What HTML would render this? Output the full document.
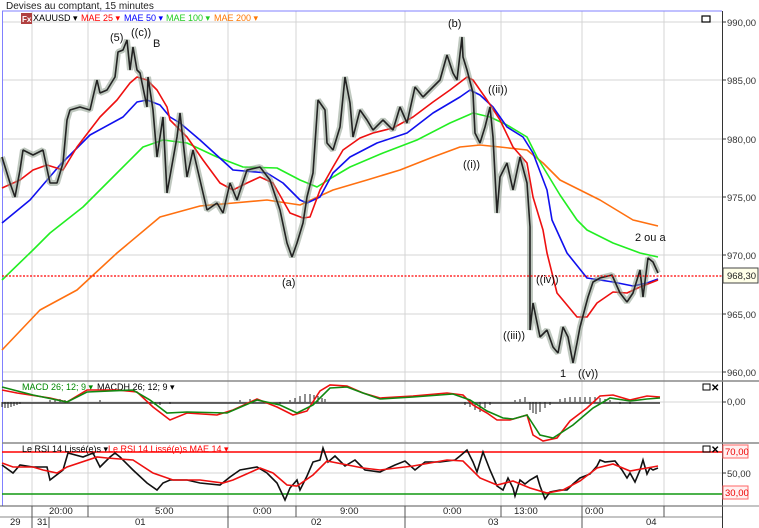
<!DOCTYPE html>
<html><head><meta charset="utf-8"><style>
html,body{margin:0;padding:0;background:#fff;width:759px;height:528px;overflow:hidden}
svg{display:block;font-family:"Liberation Sans",sans-serif}
</style></head><body>
<svg width="759" height="528" viewBox="0 0 759 528" xmlns="http://www.w3.org/2000/svg">
<rect width="759" height="528" fill="#fff"/>
<text x="6" y="9" font-size="10" fill="#222">Devises au comptant, 15 minutes</text>
<g stroke="#d4d4d4" stroke-width="1">
<line x1="32" y1="11" x2="32" y2="506"/><line x1="88" y1="11" x2="88" y2="506"/>
<line x1="228" y1="11" x2="228" y2="506"/><line x1="296" y1="11" x2="296" y2="506"/>
<line x1="405" y1="11" x2="405" y2="506"/><line x1="501" y1="11" x2="501" y2="506"/>
<line x1="582" y1="11" x2="582" y2="506"/><line x1="664" y1="11" x2="664" y2="506"/>
<line x1="2" y1="22" x2="722" y2="22"/><line x1="2" y1="80" x2="722" y2="80"/>
<line x1="2" y1="139" x2="722" y2="139"/><line x1="2" y1="197" x2="722" y2="197"/>
<line x1="2" y1="255" x2="722" y2="255"/><line x1="2" y1="314" x2="722" y2="314"/>
<line x1="2" y1="372" x2="722" y2="372"/><line x1="2" y1="402" x2="722" y2="402"/>
<line x1="2" y1="473" x2="722" y2="473"/>
</g>
<line x1="2" y1="11" x2="722" y2="11" stroke="#8080ff"/>
<line x1="2.5" y1="11" x2="2.5" y2="506" stroke="#8080ff"/>
<line x1="722.5" y1="11" x2="722.5" y2="528" stroke="#333"/>
<line x1="2" y1="381" x2="722" y2="381" stroke="#888" stroke-width="1.5"/>
<line x1="2" y1="443" x2="722" y2="443" stroke="#888" stroke-width="1.5"/>
<line x1="0" y1="506" x2="722" y2="506" stroke="#555"/>
<line x1="0" y1="517" x2="722" y2="517" stroke="#888"/>
<rect x="21" y="13" width="11" height="11" fill="#b04040"/><text x="22" y="22" font-size="8" fill="#fff" font-weight="bold">Fx</text>
<text x="33" y="21" font-size="9" fill="#000">XAUUSD ▾</text>
<text x="81" y="21" font-size="9" fill="#f00">MAE 25 ▾</text>
<text x="124" y="21" font-size="9" fill="#00f">MAE 50 ▾</text>
<text x="166" y="21" font-size="9" fill="#2c2">MAE 100 ▾</text>
<text x="214" y="21" font-size="9" fill="#f70">MAE 200 ▾</text>
<rect x="702" y="16" width="8" height="6" fill="none" stroke="#000" stroke-width="1.2"/>
<g fill="none" stroke-width="1.6" stroke-linejoin="round">
<polyline stroke="#ff7010" points="2,350 40,310 77,290 117,253 160,217 200,206 267,200 300,205 333,190 367,180 400,170 433,157 460,147 480,145 500,147 527,150 543,163 560,180 600,200 633,220 658,226"/>
<polyline stroke="#22ee22" points="2,280 33,250 50,233 83,207 117,173 143,147 163,140 187,143 217,157 243,167 277,168 300,180 317,187 333,177 350,167 383,153 417,140 450,123 473,113 490,117 507,125 527,137 537,157 560,195 577,220 587,230 613,243 640,253 658,257"/>
<polyline stroke="#1010ee" points="2,223 30,200 60,165 90,135 123,117 137,102 147,100 160,105 170,117 180,123 200,140 233,170 267,173 283,183 300,200 307,203 320,197 333,173 350,157 377,143 407,133 433,113 460,97 470,90 480,95 493,107 507,127 523,137 533,153 547,190 552,220 567,253 587,278 613,282 633,286 647,283 658,279"/>
<polyline stroke="#ee1010" points="2,188 20,180 33,170 47,165 63,170 77,147 90,130 100,117 117,100 130,83 137,77 147,80 157,90 167,107 170,120 187,137 203,160 220,183 233,190 247,183 260,177 273,183 290,213 303,218 310,217 320,190 333,167 343,150 360,138 373,133 393,128 413,117 433,102 450,90 467,77 473,80 487,100 500,120 513,147 527,163 533,197 543,230 547,253 557,293 577,317 587,317 597,303 613,292 627,293 640,287 658,280"/>
</g>
<g fill="none" stroke-linejoin="bevel">
<polyline id="pr" stroke="#8a9a8a" stroke-opacity="0.55" stroke-width="6" points="2,157 10,183 15,197 20,170 23,150 33,155 43,150 50,183 57,183 63,163 67,120 70,110 80,107 90,110 93,97 97,80 100,93 107,90 115,77 118,52 123,50 127,40 130,70 133,47 137,70 140,73 147,107 148,77 153,110 157,157 163,117 167,193 177,137 180,113 187,177 193,150 200,180 207,210 217,203 223,213 230,183 237,200 247,170 260,167 270,180 280,210 287,243 292,257 297,243 303,223 307,197 313,173 318,100 325,110 327,143 333,150 340,127 345,77 350,103 353,137 360,110 367,120 373,130 383,120 393,130 400,107 407,123 415,87 423,97 433,87 440,80 447,55 453,73 457,80 462,37 463,57 467,70 473,93 475,133 480,143 485,127 490,107 493,137 497,213 500,177 507,163 513,190 520,157 527,183 530,227 530,330 533,303 540,337 547,330 553,347 558,353 563,327 568,337 573,363 577,343 580,327 588,297 593,282 600,278 612,275 620,293 627,302 633,293 640,270 643,297 648,258 653,262 658,273"/>
<polyline stroke="#222" stroke-width="1.6" points="2,157 10,183 15,197 20,170 23,150 33,155 43,150 50,183 57,183 63,163 67,120 70,110 80,107 90,110 93,97 97,80 100,93 107,90 115,77 118,52 123,50 127,40 130,70 133,47 137,70 140,73 147,107 148,77 153,110 157,157 163,117 167,193 177,137 180,113 187,177 193,150 200,180 207,210 217,203 223,213 230,183 237,200 247,170 260,167 270,180 280,210 287,243 292,257 297,243 303,223 307,197 313,173 318,100 325,110 327,143 333,150 340,127 345,77 350,103 353,137 360,110 367,120 373,130 383,120 393,130 400,107 407,123 415,87 423,97 433,87 440,80 447,55 453,73 457,80 462,37 463,57 467,70 473,93 475,133 480,143 485,127 490,107 493,137 497,213 500,177 507,163 513,190 520,157 527,183 530,227 530,330 533,303 540,337 547,330 553,347 558,353 563,327 568,337 573,363 577,343 580,327 588,297 593,282 600,278 612,275 620,293 627,302 633,293 640,270 643,297 648,258 653,262 658,273"/>
</g>
<line x1="2" y1="276" x2="722" y2="276" stroke="#f00" stroke-dasharray="2,1.5" stroke-width="1.3"/>
<rect x="723" y="268" width="35" height="15" fill="#ffffe8" stroke="#444"/>
<text x="727" y="279" font-size="9.5" fill="#222">968,30</text>
<g font-size="11" fill="#111">
<text x="110" y="41">(5)</text><text x="131" y="36">((c))</text><text x="153" y="47">B</text>
<text x="448" y="27">(b)</text><text x="488" y="93">((ii))</text><text x="463" y="168">((i))</text>
<text x="282" y="286">(a)</text><text x="536" y="283">((iv))</text><text x="503" y="339">((iii))</text>
<text x="560" y="377">1</text><text x="578" y="377">((v))</text><text x="635" y="241">2 ou a</text>
</g>
<g font-size="9.5" fill="#333">
<text x="727" y="26">990,00</text><text x="727" y="84">985,00</text><text x="727" y="143">980,00</text>
<text x="727" y="201">975,00</text><text x="727" y="259">970,00</text><text x="727" y="318">965,00</text>
<text x="727" y="376">960,00</text><text x="727" y="405">0,00</text><text x="727" y="477">50,00</text>
</g>
<g stroke="#333"><line x1="722" y1="22" x2="726" y2="22"/><line x1="722" y1="80" x2="726" y2="80"/><line x1="722" y1="139" x2="726" y2="139"/><line x1="722" y1="197" x2="726" y2="197"/><line x1="722" y1="255" x2="726" y2="255"/><line x1="722" y1="314" x2="726" y2="314"/><line x1="722" y1="372" x2="726" y2="372"/><line x1="722" y1="402" x2="726" y2="402"/><line x1="722" y1="473" x2="726" y2="473"/></g>
<line x1="722" y1="381" x2="759" y2="381" stroke="#888" stroke-width="1.5"/>
<line x1="722" y1="443" x2="759" y2="443" stroke="#888" stroke-width="1.5"/>
<line x1="722" y1="506" x2="759" y2="506" stroke="#888"/>
<text x="22" y="390" font-size="9" fill="#080">MACD 26; 12; 9 ▾</text>
<text x="97" y="390" font-size="9" fill="#000">MACDH 26; 12; 9 ▾</text>
<rect x="703" y="384" width="7" height="6" fill="none" stroke="#000"/><text x="711" y="391" font-size="10" font-weight="bold">✕</text>
<g stroke="#333" stroke-width="1.2" stroke-dasharray="1,1">
<line x1="2" y1="403" x2="660" y2="403" stroke-dasharray="none" stroke-width="1.5"/>
</g>
<g stroke="#222" stroke-width="1">
<path d="M2 402v5M5 402v6M8 402v6M11 402v5M14 402v4M17 402v3M20 402v2M50 402v-2M55 402v-3M60 402v-3M65 402v-2M100 402v-2M150 402v2M155 402v3M160 402v3M170 402v2M240 402v-2M250 402v-3M280 402v2M290 402v-2M295 402v-4M300 402v-6M305 402v-8M310 402v-8M314 402v-7M318 402v-6M322 402v-4M325 402v-3M465 402v3M470 402v5M475 402v8M480 402v10M485 402v6M490 402v3M515 402v-2M520 402v-3M525 402v-5M530 402v8M533 402v11M536 402v12M540 402v10M545 402v6M550 402v3M560 402v-3M565 402v-4M570 402v-5M575 402v-5M580 402v-5M585 402v-5M590 402v-5M595 402v-5M600 402v-4M605 402v-3M610 402v-2M620 402v2M630 402v2"/>
</g>
<g fill="none" stroke-width="1.6">
<polyline stroke="#ee1010" points="2,390 17,393 50,398 67,402 87,390 117,390 137,392 153,407 170,420 187,413 217,415 233,410 257,399 277,407 293,415 307,411 320,391 330,385 347,386 363,393 380,398 413,396 447,393 463,395 473,405 487,413 497,420 510,420 527,415 533,435 543,441 557,438 570,421 587,408 600,396 613,395 630,400 647,396 660,397"/>
<polyline stroke="#118811" points="2,387 33,395 67,402 87,392 133,390 150,400 167,413 187,412 227,413 257,400 280,405 297,413 313,405 330,388 347,387 363,393 380,399 413,397 453,394 470,400 487,411 503,418 513,419 527,415 540,435 553,438 573,425 593,408 610,398 630,401 647,399 660,398"/>
</g>
<line x1="2" y1="452" x2="722" y2="452" stroke="#f00" stroke-width="1.5"/>
<line x1="2" y1="494" x2="722" y2="494" stroke="#191" stroke-width="1.5"/>
<text x="22" y="452" font-size="9" fill="#000">Le RSI 14 Lissé(e)s ▾</text>
<text x="108" y="452" font-size="9" fill="#f00">Le RSI 14 Lissé(e)s MAE 14 ▾</text>
<rect x="703" y="446" width="7" height="6" fill="none" stroke="#000"/><text x="711" y="453" font-size="10" font-weight="bold">✕</text>
<rect x="723" y="445" width="25" height="13" fill="#fff0f0" stroke="#f66"/><text x="725" y="455" font-size="9.5" fill="#e00">70,00</text>
<rect x="723" y="486" width="25" height="13" fill="#fff0f0" stroke="#f66"/><text x="725" y="496" font-size="9.5" fill="#e00">30,00</text>
<g fill="none" stroke-width="1.6">
<polyline stroke="#111" points="2,465 13,473 20,465 33,467 47,467 50,480 63,470 68,453 83,457 93,453 100,467 110,457 115,453 120,457 133,470 147,483 157,490 163,483 170,480 187,480 200,483 220,485 230,477 240,470 257,467 267,473 277,483 285,500 290,488 297,480 300,490 307,476 313,462 320,460 323,448 328,462 335,456 345,466 355,460 365,470 380,472 395,465 405,461 415,470 425,462 440,462 455,460 460,456 467,450 473,462 477,472 483,452 490,470 497,486 503,490 508,478 513,488 515,496 520,480 525,484 530,480 537,476 540,486 545,499 550,492 560,490 567,490 573,484 580,478 590,474 597,466 600,460 605,462 615,461 622,470 627,478 630,473 635,482 640,470 643,460 647,474 650,468 653,470 658,468"/>
<polyline stroke="#ee1010" points="2,463 13,467 33,467 43,470 57,473 67,467 97,457 107,458 133,460 153,473 173,480 200,480 223,483 233,480 260,468 273,473 287,485 297,486 313,475 327,461 363,468 380,470 413,466 447,460 463,461 480,478 497,485 513,481 530,488 547,493 563,490 580,481 597,468 613,464 630,471 647,468 658,466"/>
</g>
<g stroke="#555"><line x1="32" y1="506" x2="32" y2="528"/><line x1="49" y1="517" x2="49" y2="528"/><line x1="88" y1="506" x2="88" y2="517"/><line x1="228" y1="506" x2="228" y2="528"/><line x1="296" y1="506" x2="296" y2="517"/><line x1="405" y1="506" x2="405" y2="528"/><line x1="501" y1="506" x2="501" y2="517"/><line x1="582" y1="506" x2="582" y2="528"/><line x1="664" y1="506" x2="664" y2="517"/></g>
<g font-size="9.5" fill="#222">
<text x="49" y="514">20:00</text><text x="155" y="514">5:00</text><text x="253" y="514">0:00</text><text x="340" y="514">9:00</text><text x="443" y="514">0:00</text><text x="514" y="514">13:00</text><text x="585" y="514">0:00</text>
<text x="10" y="525">29</text><text x="37" y="525">31</text><text x="135" y="525">01</text><text x="311" y="525">02</text><text x="488" y="525">03</text><text x="646" y="525">04</text>
</g>
</svg>
</body></html>
